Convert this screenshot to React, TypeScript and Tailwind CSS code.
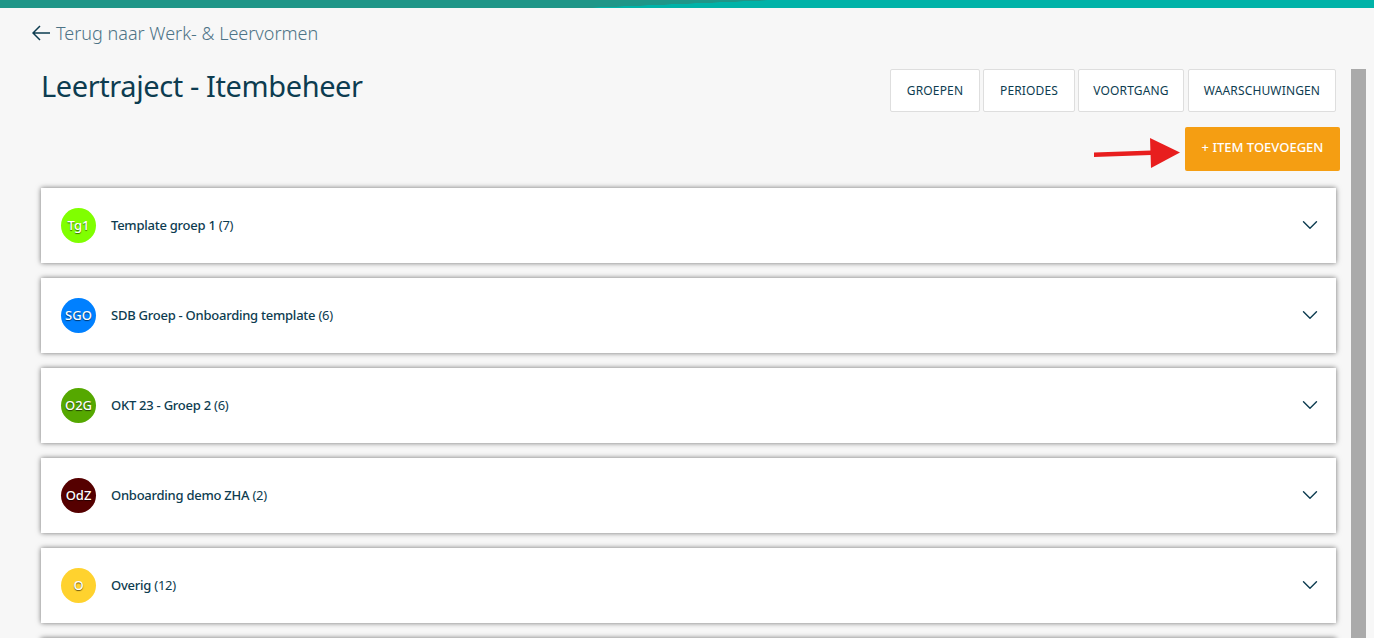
import { ChevronDown } from "lucide-react";

const groups = [
  { short: "Tg1", name: "Template groep 1", count: 7, color: "bg-[#80ff00]" },
  { short: "SGO", name: "SDB Groep - Onboarding template", count: 6, color: "bg-[#0080ff]" },
  { short: "O2G", name: "OKT 23 - Groep 2", count: 6, color: "bg-[#55a800]" },
  { short: "OdZ", name: "Onboarding demo ZHA", count: 2, color: "bg-[#550000]" },
  { short: "O", name: "Overig", count: 12, color: "bg-[#ffd22e]" },
];

const tabs = [
  { label: "GROEPEN", width: "w-[90px]" },
  { label: "PERIODES", width: "w-[92px]" },
  { label: "VOORTGANG", width: "w-[106px]" },
  { label: "WAARSCHUWINGEN", width: "w-[148px] ml-px" },
];

const GroupRow = ({ short, name, count, color }: (typeof groups)[number]) => {
  return (
    <div className="flex h-[75px] shrink-0 items-center bg-white pl-5 pr-[13px] shadow-[0_0_5px_rgba(0,0,0,0.55)]">
      <div
        className={`flex h-[35px] w-[35px] items-center justify-center rounded-full text-[13px] font-medium text-white [text-shadow:0_1px_1px_rgba(0,0,0,0.6)] ${color}`}
      >
        {short}
      </div>
      <p className="ml-[15px] flex-1 text-[13px] font-medium tracking-[-0.25px] text-[#0d3c50]">
        {name} <span className="font-normal">({count})</span>
      </p>
      <ChevronDown className="mt-[-2px] h-[26px] w-[26px] text-[#0d3c50]" strokeWidth={1.3} />
    </div>
  );
};

const App = () => {
  return (
    <div className="flex h-screen flex-col overflow-hidden bg-[#f7f7f7] font-['Noto_Sans',sans-serif]">
      <div className="h-2 shrink-0 bg-[linear-gradient(177.6deg,#1f9688_49.3%,#00b3a8_49.8%)]" />

      <a className="ml-8 mt-[13px] flex h-6 items-center gap-[6px] text-[18px] font-light text-[#4d7386]">
        <svg width="18" height="16" viewBox="0 0 18 16" fill="none" stroke="#0d3c50" strokeWidth="1.5">
          <path d="M1 8H18M8 1L1 8L8 15" />
        </svg>
        Terug naar Werk- &amp; Leervormen
      </a>

      <div className="mt-6 flex min-h-0 flex-1 pl-[41px] pr-2">
        <div className="flex min-w-0 flex-1 flex-col pr-[15px]">
          <div className="flex items-start justify-between">
            <h1 className="mt-[-2px] text-[29px] leading-[38px] tracking-[-0.4px] text-[#0d3c50]">
              Leertraject - Itembeheer
            </h1>
            <div className="flex gap-[3px]">
              {tabs.map((tab) => (
                <button
                  key={tab.label}
                  className={`h-[43px] rounded-[2px] border border-[#dedede] bg-white text-[12px] tracking-[0.15px] text-[#0d3c50] ${tab.width}`}
                >
                  {tab.label}
                </button>
              ))}
            </div>
          </div>

          <div className="mr-[-4px] mt-[15px] flex items-center justify-end gap-[5px]">
            <svg width="86" height="31" viewBox="0 0 86 31" className="mt-[9px]">
              <path d="M0 14.5L57 12.5V17L0 19Z" fill="#e81e1e" />
              <path d="M56 0L86 14.5L57 30Z" fill="#e81e1e" />
            </svg>
            <button className="h-[44px] w-[155px] rounded-[2px] bg-[#f59e12] pb-[2px] text-[13px] font-medium text-white">
              + ITEM TOEVOEGEN
            </button>
          </div>

          <div className="mt-[17px] flex flex-col gap-[15px]">
            {groups.map((group) => (
              <GroupRow key={group.short} {...group} />
            ))}
            <div className="h-[75px] shrink-0 bg-white shadow-[0_0_5px_rgba(0,0,0,0.55)]" />
          </div>
        </div>
        <div className="w-[15px] shrink-0 bg-[#aaaaaa]" />
      </div>
    </div>
  );
};

export default App;
